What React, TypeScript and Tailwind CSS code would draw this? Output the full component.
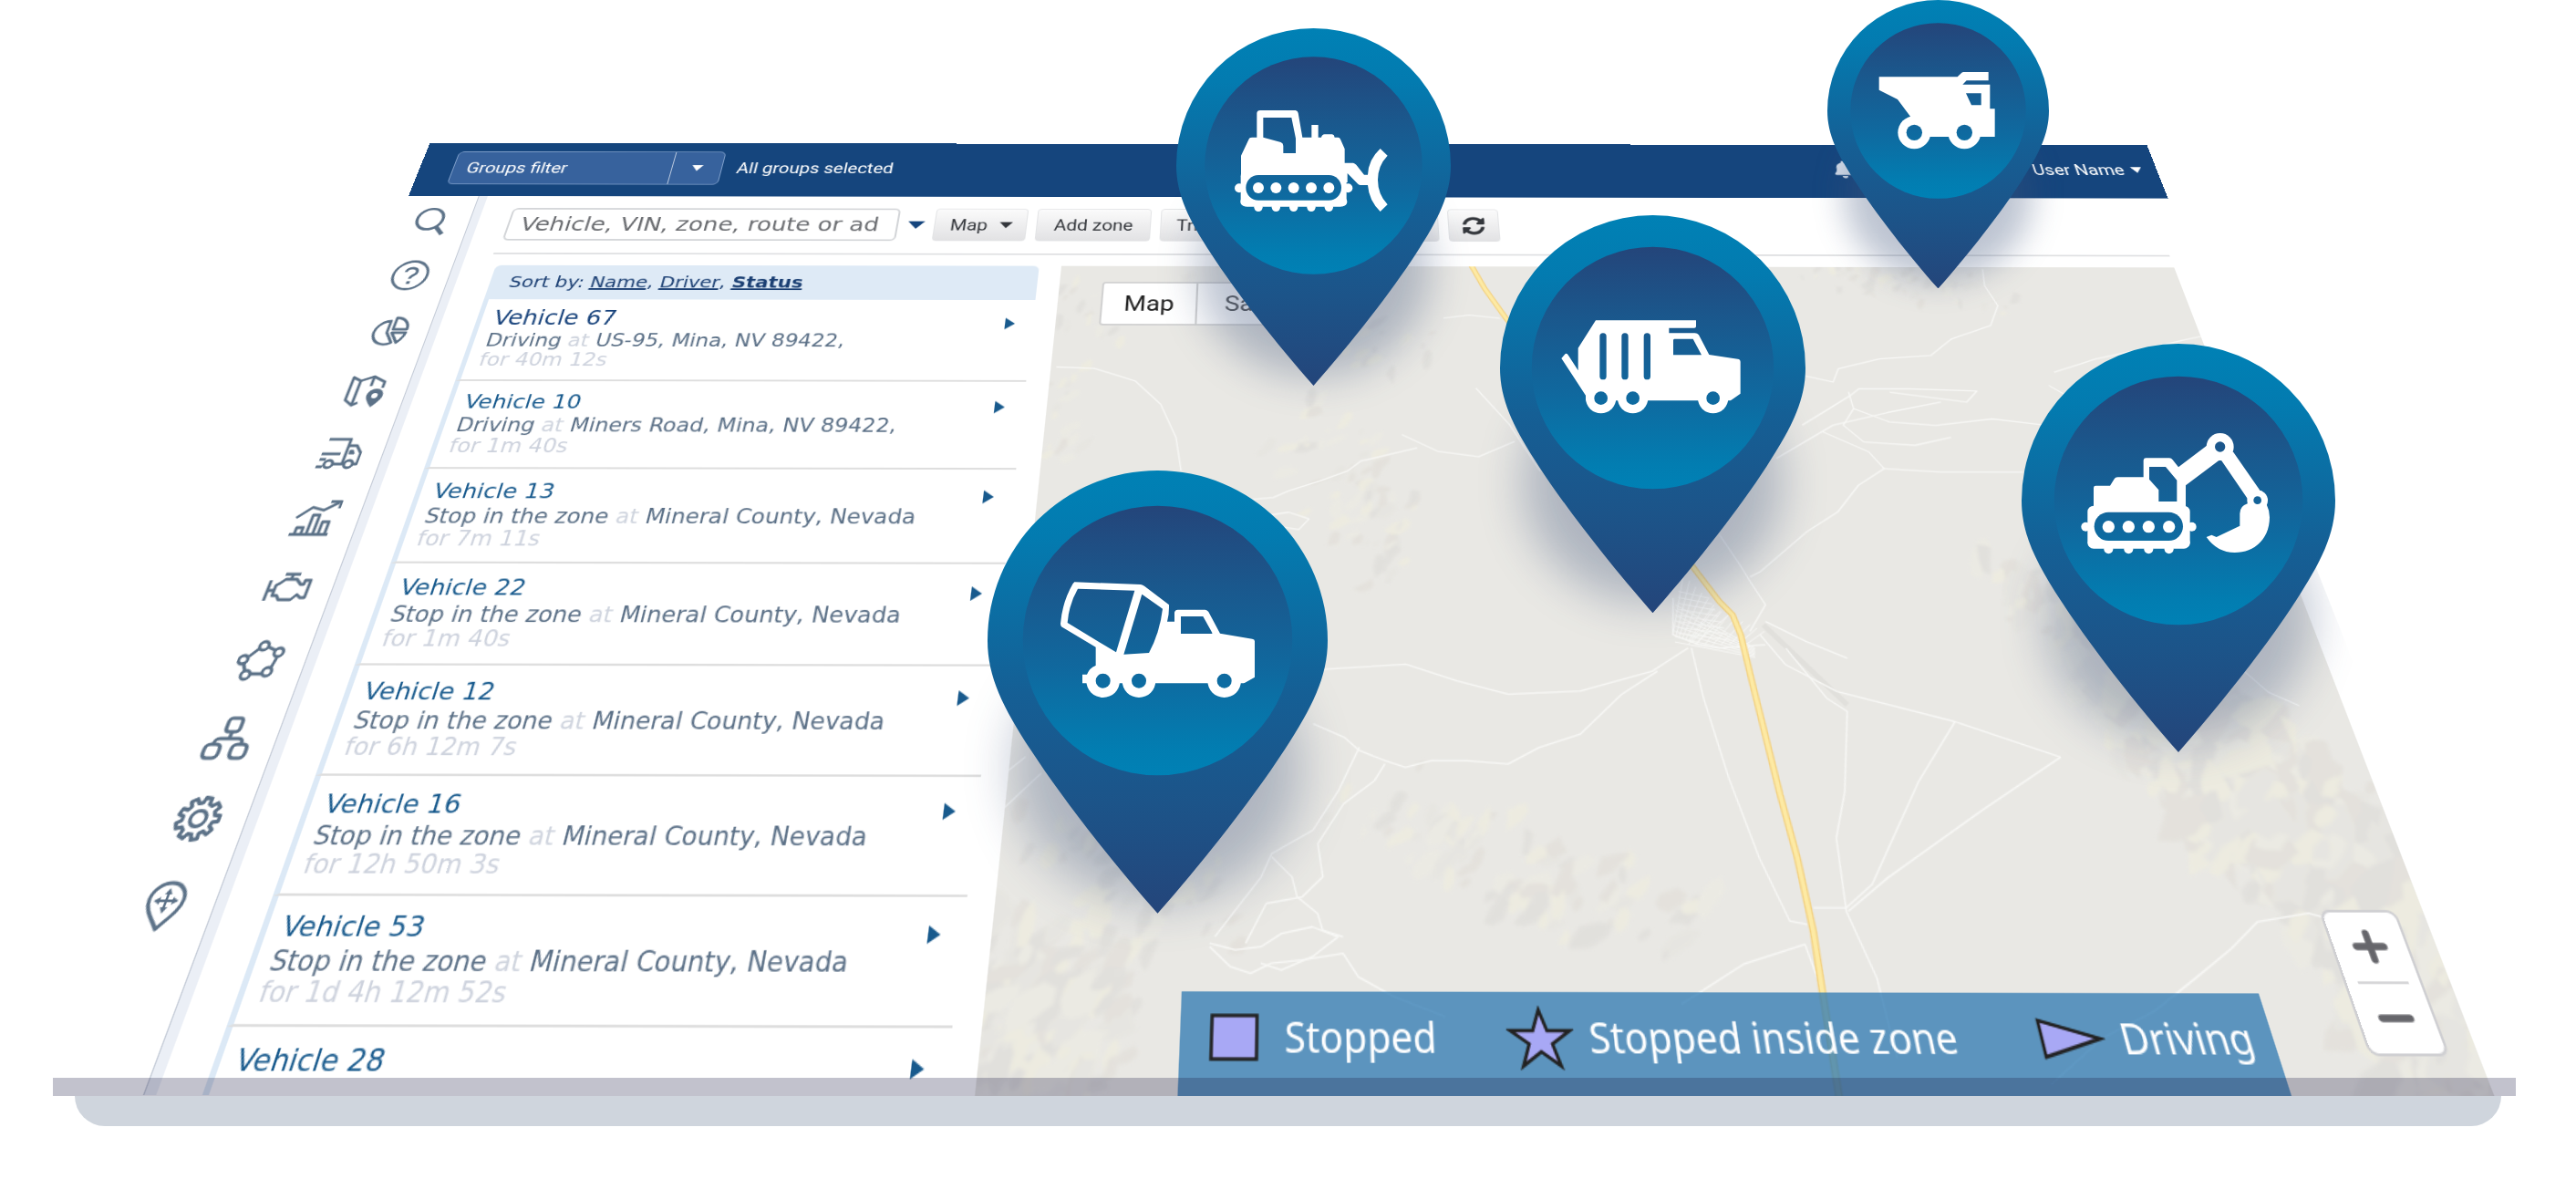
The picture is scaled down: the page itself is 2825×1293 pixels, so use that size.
import React from "react";
import { FaSyncAlt, FaBell, FaUser } from "react-icons/fa";

/* ---------- data ---------- */

type Vehicle = { name: string; state?: string; place?: string; time?: string; active?: boolean };

const vehicles: Vehicle[] = [
  { name: "Vehicle 67", state: "Driving", place: "US-95, Mina, NV 89422,", time: "for 40m 12s", active: true },
  { name: "Vehicle 10", state: "Driving", place: "Miners Road, Mina, NV 89422,", time: "for 1m 40s" },
  { name: "Vehicle 13", state: "Stop in the zone", place: "Mineral County, Nevada", time: "for 7m 11s" },
  { name: "Vehicle 22", state: "Stop in the zone", place: "Mineral County, Nevada", time: "for 1m 40s" },
  { name: "Vehicle 12", state: "Stop in the zone", place: "Mineral County, Nevada", time: "for 6h 12m 7s" },
  { name: "Vehicle 16", state: "Stop in the zone", place: "Mineral County, Nevada", time: "for 12h 50m 3s" },
  { name: "Vehicle 53", state: "Stop in the zone", place: "Mineral County, Nevada", time: "for 1d 4h 12m 52s" },
  { name: "Vehicle 28" },
];

/* ---------- small shapes ---------- */

function Caret({ className }: { className: string }) {
  return (
    <svg viewBox="0 0 20 10" preserveAspectRatio="none" className={className} aria-hidden="true">
      <path d="M0 0H20L10 10Z" fill="currentColor" />
    </svg>
  );
}

/* ---------- side navigation ---------- */

const gearPath = (() => {
  const parts: string[] = [];
  const teeth = 9;
  for (let i = 0; i < teeth; i++) {
    const a = (i / teeth) * Math.PI * 2;
    const p = (r: number, d: number) =>
      `${(20 + r * Math.cos(a + d)).toFixed(2)} ${(20 + r * Math.sin(a + d)).toFixed(2)}`;
    parts.push(`${i ? "L" : "M"}${p(17.5, -0.14)}L${p(17.5, 0.14)}L${p(13.2, 0.22)}L${p(13.2, 0.48)}`);
  }
  return parts.join("") + "Z";
})();

const navItems: { label: string; art: React.ReactNode }[] = [
  {
    label: "Search",
    art: (
      <>
        <circle cx="18" cy="17" r="13.500" strokeWidth="3.200" />
        <path d="M27 27L36 37" strokeWidth="4.500" />
      </>
    ),
  },
  {
    label: "Help",
    art: (
      <>
        <circle cx="20" cy="20" r="17.500" />
        <path d="M14.500 16C14.500 9 26 9.500 26 16C26 20 20.500 19.500 20.500 24.500" strokeWidth="3" />
        <path d="M20.500 27.500V31" strokeWidth="3.600" />
      </>
    ),
  },
  {
    label: "Reports",
    art: (
      <>
        <path d="M19 8A14 14 0 1 0 27 34L19 22Z" />
        <path d="M24 4V18H38C38 10 32 4 24 4Z" />
        <path d="M24 22H38C37 28 35 31 32 34Z" />
      </>
    ),
  },
  {
    label: "Map",
    art: (
      <>
        <path d="M17 34L12 37L4 31V5L12 9V37M12 9L24 4L36 10V17M24 4V15" />
        <path d="M31 18A8 8 0 0 1 39 26C39 31 31 39 31 39C31 39 23 31 23 26A8 8 0 0 1 31 18Z" fill="currentColor" strokeWidth="0" />
        <circle cx="31" cy="26" r="3" fill="#fff" strokeWidth="0" />
      </>
    ),
  },
  {
    label: "Deliveries",
    art: (
      <>
        <path d="M4 6H25V33H17M25 13H33L39 21V33H35M2 22H20M25 33H26" />
        <circle cx="12" cy="33" r="4" />
        <circle cx="31" cy="33" r="4" />
        <path d="M28 22V18H31L33 22Z" fill="currentColor" strokeWidth="1" />
        <path d="M2 28H8M1 36H7" />
      </>
    ),
  },
  {
    label: "Statistics",
    art: (
      <>
        <path d="M1 37H37M6 37V30H12V37M17 37V17H23V37M28 37V24H34V37" />
        <path d="M2 20L14 9L25 12L37 4" />
        <path d="M29 3H39V10" />
      </>
    ),
  },
  {
    label: "Engine",
    art: (
      <>
        <path d="M13 7H27M20 7V12M11 16L15 12H25L30 17H33V13H38V30H34L30 27L26 32H15L12 28H8V18Z" />
        <path d="M2 13V33M2 23H8" />
      </>
    ),
  },
  {
    label: "Network",
    art: (
      <>
        <path d="M16 9L9 17M6 22L10 30M16 33H27M32 28L34 18M30 11L23 8" />
        <circle cx="19" cy="7" r="4" />
        <circle cx="34" cy="13" r="4" />
        <circle cx="5" cy="20" r="4" />
        <circle cx="12" cy="34" r="4" />
        <circle cx="30" cy="31" r="4" />
      </>
    ),
  },
  {
    label: "Hierarchy",
    art: (
      <g strokeWidth="3.200">
        <rect x="14" y="3" width="12" height="12" rx="3" />
        <rect x="2" y="26" width="13" height="12" rx="4" />
        <rect x="25" y="26" width="13" height="12" rx="4" />
        <path d="M20 15V21M8 26C8 22 9 21 12 21H28C31 21 32 22 32 26" />
      </g>
    ),
  },
  {
    label: "Settings",
    art: (
      <>
        <path d={gearPath} strokeWidth="3.200" />
        <circle cx="20" cy="20" r="6.500" strokeWidth="3" />
      </>
    ),
  },
  {
    label: "Places",
    art: (
      <>
        <path d="M20 38C13 29 6 23 6 15A14 13 0 0 1 34 15C34 23 27 29 20 38Z" strokeWidth="3" />
        <path d="M20 9V24M13 16H27" strokeWidth="2" />
        <path d="M20 6L23 11H17ZM20 26L23 21H17ZM10 16L15 13V19ZM30 16L25 13V19Z" fill="currentColor" strokeWidth="0" />
      </>
    ),
  },
];

function SideNav() {
  return (
    <nav aria-label="Main" className="flex w-[75px] shrink-0 flex-col pt-3.5">
      <ul className="flex h-[736px] flex-col items-center justify-between pr-1.5">
        {navItems.map((item) => (
          <li key={item.label} className="flex">
            <button type="button" aria-label={item.label} className="text-[#5c7288]">
              <svg viewBox="0 0 40 40" className="size-10" fill="none" stroke="currentColor" strokeWidth="2.800" strokeLinejoin="round">
                {item.art}
              </svg>
            </button>
          </li>
        ))}
      </ul>
    </nav>
  );
}

/* ---------- header and toolbar ---------- */

function Header() {
  return (
    <header className="flex h-[74px] shrink-0 items-center bg-[#15457d] pr-4 pb-1 pl-9 font-['Roboto',sans-serif] text-[20px] text-white">
      <div className="flex h-[46px] w-[292px] rounded-md border border-[#7f9fca] bg-[#37629d]">
        <select aria-label="Groups filter" className="min-w-0 grow appearance-none bg-transparent pl-3.5 outline-none">
          <option>Groups filter</option>
        </select>
        <span className="flex w-[54px] items-center justify-center border-l border-[#b9c8de]">
          <Caret className="h-2 w-3" />
        </span>
      </div>
      <p className="ml-4">All groups selected</p>
      <div className="ml-auto flex items-center">
        <FaBell className="mr-[160px] size-6 text-[#d5deea]" />
        <button type="button" className="flex items-center gap-2">
          <FaUser className="mr-1 size-5" />
          User Name
          <Caret className="h-2 w-3" />
        </button>
      </div>
    </header>
  );
}

const toolButton =
  "flex h-[43px] items-center rounded border border-[#e3e4e6] bg-linear-to-b from-[#fbfbfb] to-[#e2e2e4] font-['Roboto',sans-serif] text-[20px] text-[#33363b]";

function Toolbar() {
  return (
    <div className="mr-[22px] ml-7 flex h-[77px] shrink-0 items-center border-b-2 border-[#dfe0e2]">
      <input
        type="text"
        aria-label="Search"
        placeholder="Vehicle, VIN, zone, route or ad"
        className="ml-1 h-[43px] w-[413px] rounded-md border-2 border-[#d3d5d8] bg-white px-3 text-[25px] outline-none placeholder:text-[#6a6c70] placeholder:opacity-100"
      />
      <button type="button" aria-label="Search options" className="mx-2.5 text-[#15457d]">
        <Caret className="h-2.5 w-[18px]" />
      </button>
      <div className="flex gap-2.5">
        <button type="button" className={toolButton + " w-[98px] gap-3 pl-4"}>
          Map
          <Caret className="h-2 w-3.5" />
        </button>
        <button type="button" className={toolButton + " w-[121px] justify-center"}>
          Add zone
        </button>
        <button type="button" className={toolButton + " w-[294px] pl-4"}>
          Trips history
        </button>
        <button type="button" aria-label="Refresh" className={toolButton + " w-[54px] justify-center"}>
          <FaSyncAlt className="size-6" />
        </button>
      </div>
    </div>
  );
}

/* ---------- vehicle list ---------- */

function VehicleList() {
  return (
    <section aria-label="Vehicles" className="w-[564px] shrink-0 text-[21px]">
      <p className="h-[43px] rounded-t-md bg-[#deeaf6] pl-5 text-[20px] leading-[43px] text-[#1b3f73]">
        Sort by: <a href="#name" className="underline">Name</a>, <a href="#driver" className="underline">Driver</a>,{" "}
        <a href="#status" className="font-bold underline">Status</a>
      </p>
      <ul>
        {vehicles.map((v) => (
          <li key={v.name} className="flex h-[98px] justify-between border-b-2 border-l-[5px] border-b-[#dedede] border-l-[#dce9f6] pt-2.5 pr-[18px] pl-3">
            <div>
              <a
                href="#vehicle"
                className={v.active ? "block text-[24px] leading-[27px] text-[#17427b]" : "block text-[22px] leading-[27px] text-[#185a8d]"}
              >
                {v.name}
              </a>
              {v.state && (
                <>
                  <p className="leading-[26px] text-[#5a6f86]">
                    {v.state} <span className="text-[#cfd4de]">at</span> {v.place}
                  </p>
                  <p className="leading-[20px] text-[#cdd2dd]">{v.time}</p>
                </>
              )}
            </div>
            <button type="button" aria-label={"Open " + v.name} className="mt-3 h-3.5 w-2.5 text-[#185a8d]">
              <svg viewBox="0 0 10 14" className="h-3.5 w-2.5" aria-hidden="true">
                <path d="M0 0L10 7L0 14Z" fill="currentColor" />
              </svg>
            </button>
          </li>
        ))}
      </ul>
    </section>
  );
}

/* ---------- map ---------- */

function onSheet(x: number, y: number): [number, number] {
  const s = (2344 + 0.729 * y) / 2351;
  return [(1.1256 * x - 352.5) / s + 235, 3060.4 * (1 - 1 / s) - 164];
}

function line(points: number[]) {
  let d = "";
  for (let i = 0; i < points.length; i += 2) {
    const [u, v] = onSheet(points[i], points[i + 1]);
    d += `${i ? "L" : "M"}${u.toFixed(1)} ${v.toFixed(1)}`;
  }
  return d;
}

const highway = [488, 180, 505, 225, 526, 270, 620, 440, 690, 600, 710, 645, 735, 695, 748, 715, 756, 745, 768, 820, 795, 985, 812, 1080, 828, 1190, 838, 1290, 855, 1450];

const roads = [
  [88, 344, 125, 346, 165, 365, 190, 400, 205, 450, 210, 500],
  [425, 445, 460, 470, 500, 478, 535, 455],
  [465, 270, 490, 265, 520, 270],
  [497, 375, 530, 430, 560, 500],
  [210, 565, 240, 560, 265, 545, 300, 540, 315, 530, 345, 515, 372, 500, 385, 485, 440, 465],
  [260, 575, 315, 562, 335, 572, 325, 588, 290, 580],
  [815, 355, 845, 365, 850, 345, 890, 330, 940, 325, 960, 300, 998, 280, 1005, 250, 992, 220, 990, 195],
  [815, 430, 862, 385, 870, 375, 920, 375, 985, 378, 975, 395, 900, 380],
  [790, 480, 845, 430, 900, 410, 950, 395],
  [860, 380, 865, 405, 855, 430, 875, 455, 925, 460, 960, 448],
  [865, 405, 900, 425, 945, 430, 1000, 420, 1055, 430],
  [835, 440, 880, 470, 895, 495, 870, 520, 850, 560, 820, 590, 790, 630, 775, 650, 765, 658],
  [895, 495, 950, 500, 1030, 500],
  [735, 595, 755, 640, 765, 665, 780, 700, 765, 740],
  [1060, 350, 1100, 330, 1160, 310, 1205, 295],
  [1055, 370, 1090, 400, 1110, 410],
  [690, 690, 690, 745, 715, 760, 735, 765, 780, 760],
  [708, 765, 720, 840, 745, 960, 775, 1080, 805, 1175, 822, 1180],
  [705, 765, 670, 800, 600, 830, 530, 835, 480, 815, 430, 790, 350, 798],
  [775, 745, 800, 790, 850, 830, 965, 875, 1068, 928],
  [780, 725, 820, 755, 860, 780],
  [965, 875, 930, 965, 885, 1120, 860, 1155, 828, 1155],
  [1068, 928, 990, 1010, 900, 1110, 862, 1160],
  [800, 765, 840, 840, 860, 860, 858, 980, 850, 1050, 860, 1160, 890, 1260, 910, 1380],
  [340, 880, 370, 900, 385, 920, 410, 935, 430, 945, 455, 935, 490, 935, 530, 940, 560, 915, 600, 895, 640, 835, 675, 800],
  [385, 915, 365, 980, 340, 1040, 300, 1075, 290, 1110, 265, 1160, 245, 1200],
  [410, 940, 400, 965, 370, 1000, 345, 1060, 350, 1110, 330, 1140, 295, 1150, 275, 1210],
  [300, 1080, 320, 1110, 325, 1140, 345, 1165, 350, 1190, 370, 1200],
  [240, 1210, 265, 1220, 290, 1215, 310, 1195, 340, 1185, 365, 1200, 340, 1230, 310, 1250, 290, 1240],
  [240, 1215, 260, 1245, 280, 1255, 300, 1240, 330, 1235, 370, 1225, 385, 1260, 420, 1290, 470, 1320],
  [700, 1300, 760, 1240, 820, 1210, 832, 1260],
  [1160, 1310, 1200, 1260, 1235, 1215, 1260, 1175, 1310, 1162, 1330, 1170],
  [1160, 1310, 1110, 1350, 1060, 1420],
  [1190, 760, 1240, 790, 1270, 830, 1300, 850],
  [15, 985, 60, 930],
  [20, 1060, 30, 1020, 75, 955],
];

const townGrid = (() => {
  const out: number[][] = [];
  for (let i = 0; i < 8; i++) {
    out.push([700 + i * 6, 655 + i * 9, 690 + i * 3, 745 + i * 2]);
    out.push([695, 680 + i * 9, 725 + i * 3, 690 + i * 9]);
    out.push([705 + i * 8, 760, 730 + i * 7, 705 + i * 5]);
    out.push([692, 700 + i * 8, 770, 765 + i * 2]);
  }
  return out;
})();

/* Each hill range: centre line from (x1,y1) to (x2,y2), spread, number of patches and patch size. */
const ranges: [number, number, number, number, number, number, number][] = [
  [1010, 640, 1240, 1080, 38, 140, 28],
  [1140, 760, 1450, 1260, 70, 520, 42],
  [1240, 960, 1480, 1420, 80, 420, 44],
  [90, 1210, 60, 1430, 110, 170, 30],
  [400, 1000, 680, 1190, 85, 90, 22],
  [90, 1040, 260, 1180, 60, 50, 20],
  [240, 220, 420, 310, 60, 60, 16],
  [340, 420, 420, 640, 60, 80, 17],
  [60, 210, 130, 300, 45, 40, 14],
  [840, 200, 1010, 240, 35, 60, 14],
  [100, 330, 90, 480, 30, 20, 15],
];

const patches = (() => {
  let seed = 71;
  const rnd = () => {
    seed = (seed * 16807) % 2147483647;
    return seed / 2147483647;
  };
  const tones = ["#dfdeda", "#ecebe3", "#e2dfd9", "#efeddf", "#e6e5e0"];
  const list: { d: string; fill: string }[] = [];
  for (const [x1, y1, x2, y2, spread, count, size] of ranges) {
    for (let i = 0; i < count; i++) {
      const t = rnd();
      const cx = x1 + (x2 - x1) * t + (rnd() + rnd() - 1) * spread;
      const cy = y1 + (y2 - y1) * t + (rnd() + rnd() - 1) * spread;
      const [u, v] = onSheet(cx, cy);
      const lean = rnd() * 1.2 - 1.5;
      const r = size * (0.25 + rnd() * 0.7);
      let d = "";
      for (let k = 0; k < 7; k++) {
        const a = (k / 7) * Math.PI * 2;
        const q = r * (0.5 + rnd() * 0.6);
        const px = Math.cos(a) * q;
        const py = Math.sin(a) * q * 0.45;
        const X = u + px * Math.cos(lean) - py * Math.sin(lean);
        const Y = v + px * Math.sin(lean) + py * Math.cos(lean);
        d += `${k ? "L" : "M"}${X.toFixed(1)} ${Y.toFixed(1)}`;
      }
      list.push({ d: d + "Z", fill: tones[Math.floor(rnd() * tones.length)] });
    }
  }
  return list;
})();

function Terrain() {
  return (
    <svg viewBox="0 0 1155 777" preserveAspectRatio="none" className="absolute inset-0 size-full" aria-hidden="true">
      <defs>
        <filter id="hill-soft" x="-5%" y="-5%" width="110%" height="110%">
          <feGaussianBlur stdDeviation="1.400" />
        </filter>
      </defs>
      <rect width="1155" height="777" fill="#e9e8e4" />
      <g filter="url(#hill-soft)" opacity="0.7">
        {patches.map((p, i) => (
          <path key={i} d={p.d} fill={p.fill} />
        ))}
      </g>
      <path d={line([778, 730, 860, 850])} stroke="#e1e0dc" strokeWidth="5" fill="none" />
      <g fill="none" stroke="#f8f8f6" strokeWidth="1.300" strokeLinejoin="round">
        {roads.map((r, i) => (
          <path key={i} d={line(r)} />
        ))}
        {townGrid.map((r, i) => (
          <path key={i} d={line(r)} strokeWidth="0.900" />
        ))}
      </g>
      <path d={line(highway)} fill="none" stroke="#f3d180" strokeWidth="6" strokeLinejoin="round" />
      <path d={line(highway)} fill="none" stroke="#fdeaa4" strokeWidth="3.500" strokeLinejoin="round" />
    </svg>
  );
}

function Legend() {
  return (
    <ul className="absolute bottom-0 left-[154px] flex h-[75px] w-[846px] items-center bg-[#2c78b1]/75 pr-4 pb-2.5 pl-[23px] font-['Noto_Sans',sans-serif] text-[30px] whitespace-nowrap text-white">
      <li className="flex items-center gap-5">
        <svg viewBox="0 0 38 34" className="h-[34px] w-[38px]" aria-hidden="true">
          <rect x="1.500" y="1.500" width="35" height="31" fill="#a8a8f5" stroke="#222" strokeWidth="2.500" />
        </svg>
        Stopped
      </li>
      <li className="ml-[54px] flex items-center gap-3">
        <svg viewBox="0 0 52 46" className="h-[46px] w-[52px]" aria-hidden="true">
          <path d="M26 3L31.500 18H49L35 27.500L40.500 43L26 33L11.500 43L17 27.500L3 18H20.500Z" fill="#a8a8f5" stroke="#222" strokeWidth="2.500" />
        </svg>
        Stopped inside zone
      </li>
      <li className="ml-auto flex items-center gap-3">
        <svg viewBox="0 0 52 32" className="h-8 w-[52px]" aria-hidden="true">
          <path d="M3 3L48 16L3 29Z" fill="#a8a8f5" stroke="#222" strokeWidth="2.500" />
        </svg>
        Driving
      </li>
    </ul>
  );
}

function MapPanel() {
  return (
    <section aria-label="Map" className="relative mr-[22px] ml-[23px] grow overflow-hidden">
      <Terrain />
      <div className="absolute top-5 left-11 flex h-[54px] rounded border-2 border-[#d2d2d2] bg-white font-['Roboto',sans-serif] text-[26px]">
        <button type="button" className="w-[95px] text-[#222]">Map</button>
        <button type="button" className="w-[150px] border-l-2 border-[#d2d2d2] text-[#555]">Satellite</button>
      </div>
      <div className="absolute right-[22px] bottom-[30px] flex w-[62px] flex-col items-center rounded-lg border-2 border-[#cfcfd2] bg-white text-[#66666b]">
        <button type="button" aria-label="Zoom in" className="flex h-[52px] items-center">
          <svg viewBox="0 0 28 28" className="size-7" fill="none" stroke="currentColor" strokeWidth="5.500" strokeLinecap="round" aria-hidden="true">
            <path d="M14 4V24M3 14H25" />
          </svg>
        </button>
        <span className="h-0.5 w-10 bg-[#d6d6d8]" />
        <button type="button" aria-label="Zoom out" className="flex h-[50px] items-center">
          <svg viewBox="0 0 28 28" className="size-7" fill="none" stroke="currentColor" strokeWidth="5.500" strokeLinecap="round" aria-hidden="true">
            <path d="M3 14H25" />
          </svg>
        </button>
      </div>
      <Legend />
    </section>
  );
}

/* ---------- pins ---------- */

const pinPath =
  "M150.500 0A150.500 150.500 0 0 1 301 150.500C301 183 287 210 263 247C235 290 192 345 150.500 392C109 345 66 290 38 247C14 210 0 183 0 150.500A150.500 150.500 0 0 1 150.500 0Z";

function Bulldozer() {
  return (
    <>
      <path d="M303 590V512L330 455Q333 452 340 452H355V372Q356 363 366 363H482Q490 364 491 372L505 452H535V411H557V452H567Q569 443 578 442H603Q610 443 611 452H622Q628 452 630 458L644 490V536H672Q677 537 682 542L708 575H720Q722 525 761 489L785 512Q753 545 753 592Q753 640 785 673L761 696Q724 660 720 609H695Q690 609 686 604L653 570V600H303Z" />
      <rect x="302" y="560" width="348" height="120" rx="20" />
      {[360, 418, 476, 534, 592].map((x) => <circle key={x} cx={x} cy="682" r="14" />)}
      {[[297, 619], [655, 619], [316, 664], [637, 664]].map(([x, y]) => <circle key={x} cx={x} cy={y} r="15" />)}
      <g fill="#000">
        <path d="M376 387H469L483 455V504H442V480Q442 471 434 468L376 452Z" />
        <rect x="319" y="576" width="314" height="83" rx="41" />
      </g>
      {[360, 418, 476, 534, 592].map((x) => <circle key={x} cx={x} cy="618" r="18" />)}
    </>
  );
}

function DumpTruck() {
  return (
    <>
      <path d="M242 253H500L514 239Q516 237 520 237H602V265H530L517 278H607V358H623V450H358V400L345 383L303 327L242 296Z" />
      <circle cx="358" cy="436" r="54" />
      <circle cx="523" cy="436" r="54" />
      <g fill="#000">
        <circle cx="358" cy="436" r="26" />
        <circle cx="523" cy="436" r="26" />
        <path d="M528 307H578V346H546Z" />
      </g>
    </>
  );
}

function GarbageTruck() {
  return (
    <>
      <path d="M390 393H720V413Q720 418 714 418H631V435H716Q724 435 729 441L763 506L857 520Q866 521 866 530V634L836 655Q833 657 828 657H357V640L277 518L290 503Q296 501 300 508L332 558V484Z" />
      {[407, 512, 776].map((x) => <circle key={x} cx={x} cy="649" r="50" />)}
      <g fill="#000">
        {[407, 512, 776].map((x) => <circle key={x} cx={x} cy="649" r="22" />)}
        {[403, 475, 548].map((x) => <rect key={x} x={x} y="435" width="22" height="153" rx="11" />)}
        <path d="M648 454H710L738 507H645V457Z" />
      </g>
    </>
  );
}

function Excavator() {
  return (
    <>
      <path d="M348 600V525Q348 518 355 518H402L416 496Q419 490 427 490H512V434Q513 427 520 427H597Q604 427 608 433L627 457L735 375L808 408L893 530L905 560H854L769 436Q764 433 759 436L651 517V600Z" />
      <circle cx="764" cy="390" r="45" />
      <circle cx="887" cy="566" r="34" />
      <path d="M854 577Q829 585 829 610V650L752 687L736 680L719 687Q755 738 812 738C880 738 927 690 927 622Q927 600 917 580L887 560Z" />
      <rect x="328" y="584" width="337" height="141" rx="20" />
      {[397, 463, 529, 596].map((x) => <circle key={x} cx={x} cy="727" r="15" />)}
      {[[322, 653], [671, 653], [344, 706], [650, 706]].map(([x, y]) => <circle key={x} cx={x} cy={y} r="15" />)}
      <g fill="#000">
        <path d="M531 456H585L622 500V570H562V532L531 497Z" />
        <circle cx="764" cy="390" r="17" />
        <circle cx="887" cy="566" r="13" />
        <rect x="350" y="605" width="292" height="94" rx="47" />
      </g>
      {[397, 463, 529, 596].map((x) => <circle key={x} cx={x} cy="653" r="20" />)}
    </>
  );
}

function Mixer() {
  return (
    <>
      <path d="M355 415L573 423Q580 424 586 429L666 490Q667 520 660 545H684V515Q686 506 695 506H785Q792 507 796 513L834 584L940 602Q948 603 948 610V728L916 746Q912 748 906 748H381V719H396Q405 697 425 690V629L312 562Q309 558 309 552Q315 480 350 420Z" />
      {[449, 567, 848].map((x) => <circle key={x} cx={x} cy="740" r="55" />)}
      <g fill="#000">
        <path d="M366 437L553 443L492 646L332 549Q337 487 366 437Z" />
        <path d="M577 455L645 503Q636 580 600 648L517 653Z" />
        <path d="M705 528H778L808 582V585H705Z" />
        {[449, 567, 848].map((x) => <circle key={x} cx={x} cy="740" r="24" />)}
      </g>
    </>
  );
}

type PinSpec = {
  id: string;
  label: string;
  place: string;
  box: string;
  art: React.ReactNode;
};

const pins: PinSpec[] = [
  { id: "bulldozer", label: "Bulldozer", place: "top-[31px] left-[1290px] w-[301px]", box: "90 93 903 1176", art: <Bulldozer /> },
  { id: "dump", label: "Dump truck", place: "top-0 left-[2004px] w-[243px]", box: "72 0 729 949.410", art: <DumpTruck /> },
  { id: "garbage", label: "Garbage truck", place: "top-[236px] left-[1645px] w-[335px]", box: "75 47 1005 1308.840", art: <GarbageTruck /> },
  { id: "excavator", label: "Excavator", place: "top-[377px] left-[2217px] w-[344px]", box: "111 51 1032 1344", art: <Excavator /> },
  { id: "mixer", label: "Concrete mixer", place: "top-[516px] left-[1083px] w-[373px]", box: "69 48 1119 1457.300", art: <Mixer /> },
];

function PinShadow({ pin }: { pin: PinSpec }) {
  return (
    <div className={"absolute " + pin.place}>
      <svg viewBox="0 0 301 392" className="w-full overflow-visible" aria-hidden="true">
        <defs>
          <filter id={"blur-" + pin.id} x="-50%" y="-50%" width="200%" height="200%">
            <feGaussianBlur stdDeviation="22" />
          </filter>
        </defs>
        <ellipse cx="150.500" cy="264" rx="128" ry="118" fill="#41557c" opacity="0.340" filter={`url(#blur-${pin.id})`} />
      </svg>
    </div>
  );
}

function Pin({ pin }: { pin: PinSpec }) {
  return (
    <div className={"absolute " + pin.place}>
      <svg viewBox="0 0 301 392" className="w-full" role="img" aria-label={pin.label}>
        <defs>
          <linearGradient id={"rim-" + pin.id} x1="0" y1="0" x2="0" y2="1">
            <stop offset="0" stopColor="#0081b5" />
            <stop offset="0.150" stopColor="#037bb0" />
            <stop offset="0.500" stopColor="#155f95" />
            <stop offset="0.750" stopColor="#1c5489" />
            <stop offset="1" stopColor="#24457a" />
          </linearGradient>
          <linearGradient id={"face-" + pin.id} x1="0" y1="0" x2="0" y2="1">
            <stop offset="0" stopColor="#24457a" />
            <stop offset="0.300" stopColor="#1a588d" />
            <stop offset="0.600" stopColor="#10689e" />
            <stop offset="0.900" stopColor="#027db1" />
            <stop offset="1" stopColor="#0081b5" />
          </linearGradient>
          <mask id={"art-" + pin.id} maskUnits="userSpaceOnUse" x="0" y="0" width="1300" height="1300">
            <g fill="#fff">{pin.art}</g>
          </mask>
        </defs>
        <path d={pinPath} fill={`url(#rim-${pin.id})`} />
        <circle cx="150.500" cy="150.500" r="119.300" fill={`url(#face-${pin.id})`} />
        <svg viewBox={pin.box} x="0" y="0" width="301" height="392">
          <rect width="1300" height="1300" fill="#fff" mask={`url(#art-${pin.id})`} />
        </svg>
      </svg>
    </div>
  );
}

/* ---------- page ---------- */

export default function App() {
  return (
    <main className="relative min-h-screen overflow-hidden bg-white pt-[158px] font-['DejaVu_Sans',Verdana,sans-serif]">
      {/* Laptop screen lying back in perspective */}
      <div className="mx-auto flex h-[942px] w-2/3 origin-top [transform:perspective(1959px)_rotateX(39.8deg)_rotate(0.1deg)_skewX(-0.1deg)] flex-col overflow-hidden bg-white">
        <Header />
        <div className="flex min-h-0 flex-1">
          <SideNav />
          <div className="w-2.5 shrink-0 border-l border-[#c3cad6] bg-[#ebeff6]" />
          <div className="flex min-w-0 grow flex-col">
            <Toolbar />
            <div className="flex min-h-0 flex-1 pt-3.5 pl-[35px]">
              <VehicleList />
              <MapPanel />
            </div>
          </div>
        </div>
      </div>

      {/* Laptop base */}
      <div className="relative mt-[82px]">
        <div className="mr-[66px] ml-[58px] h-5 bg-[#1c1c48]/27" />
        <div className="mx-[82px] h-[33px] rounded-b-[56px] bg-[#cfd5dd]" />
      </div>

      <div className="absolute inset-x-0 top-0 h-[1201px] [clip-path:polygon(16.8%_13.1%,83.4%_13.1%,98%_100%,2%_100%)]">
        {pins.map((p) => <PinShadow key={p.id} pin={p} />)}
      </div>
      {pins.map((p) => <Pin key={p.id} pin={p} />)}
    </main>
  );
}
